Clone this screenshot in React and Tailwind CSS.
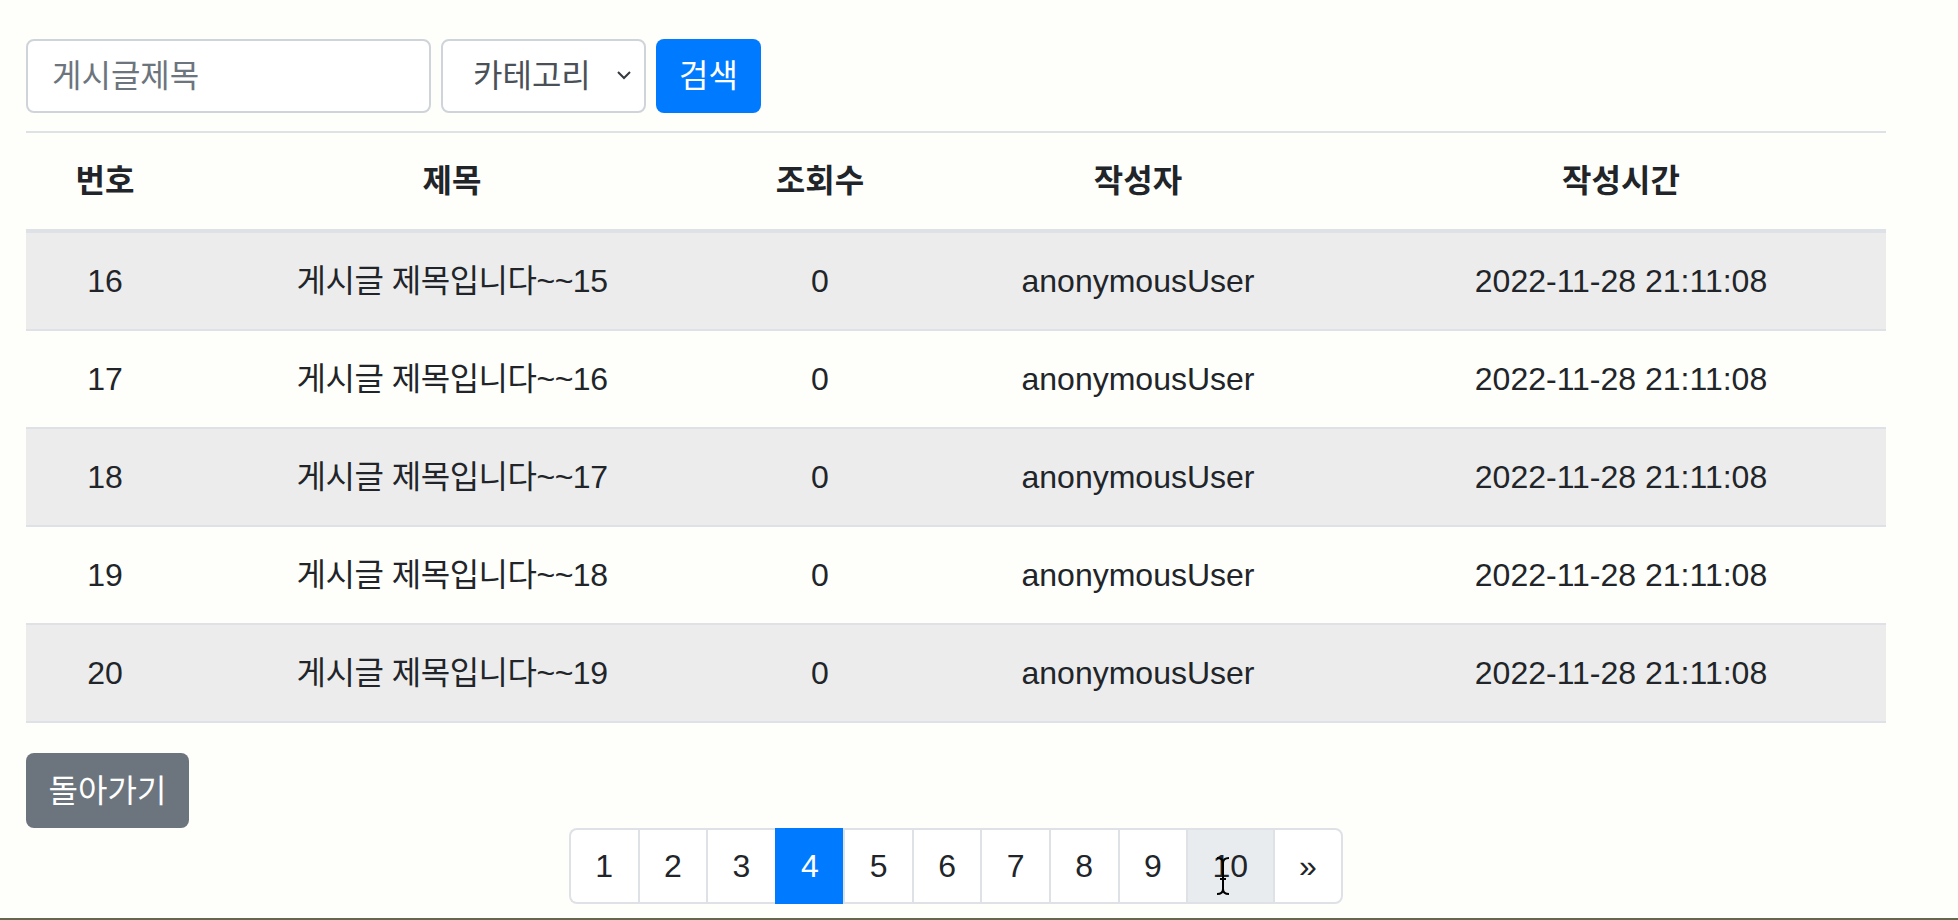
import React from 'react';

const posts = [
    { id: 16, title: '게시글 제목입니다~~15' },
    { id: 17, title: '게시글 제목입니다~~16' },
    { id: 18, title: '게시글 제목입니다~~17' },
    { id: 19, title: '게시글 제목입니다~~18' },
    { id: 20, title: '게시글 제목입니다~~19' },
];

const pages = ['1', '2', '3', '4', '5', '6', '7', '8', '9', '10', '»'];

const App = () => {
    return (
        <div
            className="h-[920px] bg-[#fefefa] text-[#212529] border-b-2 border-[#65674f] overflow-hidden"
            style={{ fontFamily: '"Liberation Sans", "Noto Sans CJK KR", sans-serif' }}
        >
            <div className="w-[1860px] ml-[26px] pt-[39px]">
                {/* 검색 폼 */}
                <form className="flex items-center gap-[10px] pb-[18px]">
                    <input
                        type="text"
                        placeholder="게시글제목"
                        className="w-[405px] h-[74px] px-[24px] text-[32px] bg-white border-2 border-[#ced4da] rounded-[8px] placeholder:text-[#6c757d] outline-none"
                    />
                    <div className="relative w-[205px] h-[74px]">
                        <select className="appearance-none w-full h-full pl-[30px] pr-[40px] text-[32px] text-[#495057] bg-white border-2 border-[#ced4da] rounded-[8px] outline-none">
                            <option>카테고리</option>
                        </select>
                        <svg
                            className="absolute right-[15px] top-[32px] pointer-events-none"
                            width="14"
                            height="9"
                            viewBox="0 0 14 9"
                            fill="none"
                            stroke="#343a40"
                            strokeWidth="2"
                        >
                            <path d="M1 1l6 6 6-6" />
                        </svg>
                    </div>
                    <button
                        type="button"
                        className="w-[105px] h-[74px] bg-[#007bff] text-white text-[32px] rounded-[8px] flex items-center justify-center"
                    >
                        검색
                    </button>
                </form>

                {/* 게시글 목록 */}
                <table className="w-full table-fixed border-collapse text-center text-[32px] leading-[48px]">
                    <thead>
                        <tr>
                            <th className="w-[158px] py-[24px] font-bold border-t-2 border-b-4 border-[#dee2e6]">번호</th>
                            <th className="w-[536px] py-[24px] font-bold border-t-2 border-b-4 border-[#dee2e6]">제목</th>
                            <th className="w-[200px] py-[24px] font-bold border-t-2 border-b-4 border-[#dee2e6]">조회수</th>
                            <th className="w-[436px] py-[24px] font-bold border-t-2 border-b-4 border-[#dee2e6]">작성자</th>
                            <th className="w-[530px] py-[24px] font-bold border-t-2 border-b-4 border-[#dee2e6]">작성시간</th>
                        </tr>
                    </thead>
                    <tbody>
                        {posts.map((post, i) => (
                            <tr key={post.id} className={i % 2 === 0 ? 'bg-[#ececec]' : ''}>
                                <td className="py-[24px] border-b-2 border-[#dee2e6]">{post.id}</td>
                                <td className="py-[24px] border-b-2 border-[#dee2e6] tracking-[-0.5px]">{post.title}</td>
                                <td className="py-[24px] border-b-2 border-[#dee2e6]">0</td>
                                <td className="py-[24px] border-b-2 border-[#dee2e6]">anonymousUser</td>
                                <td className="py-[24px] border-b-2 border-[#dee2e6]">2022-11-28 21:11:08</td>
                            </tr>
                        ))}
                    </tbody>
                </table>

                <button
                    type="button"
                    className="mt-[30px] w-[163px] h-[75px] bg-[#6c757d] text-white text-[32px] rounded-[8px] flex items-center justify-center"
                >
                    돌아가기
                </button>

                {/* 페이지네이션 */}
                <nav className="flex justify-center">
                    <ul className="flex text-[32px] leading-[40px]">
                        {pages.map((p, i) => {
                            const first = i === 0;
                            const last = i === pages.length - 1;
                            const active = p === '4';
                            const hover = p === '10';
                            return (
                                <li
                                    key={p}
                                    className={`relative h-[76px] px-[24.4px] flex items-center border-y-2 border-l-2 ${
                                        active
                                            ? 'bg-[#007bff] border-[#007bff] text-white'
                                            : hover
                                            ? 'bg-[#e9ecef] border-[#dee2e6]'
                                            : 'bg-white border-[#dee2e6]'
                                    } ${first ? 'rounded-l-[8px]' : ''} ${last ? 'border-r-2 rounded-r-[8px]' : ''}`}
                                >
                                    {p}
                                    {hover && (
                                        <svg
                                            className="absolute left-[27px] top-[26px]"
                                            width="16"
                                            height="40"
                                            viewBox="0 0 16 40"
                                            fill="none"
                                            stroke="#000"
                                            strokeWidth="2"
                                        >
                                            <path d="M2 2c4 0 6 2 6 5c0-3 2-5 6-5M8 7v26M2 38c4 0 6-2 6-5c0 3 2 5 6 5M5 23h6" />
                                        </svg>
                                    )}
                                </li>
                            );
                        })}
                    </ul>
                </nav>
            </div>
        </div>
    );
};

export default App;
